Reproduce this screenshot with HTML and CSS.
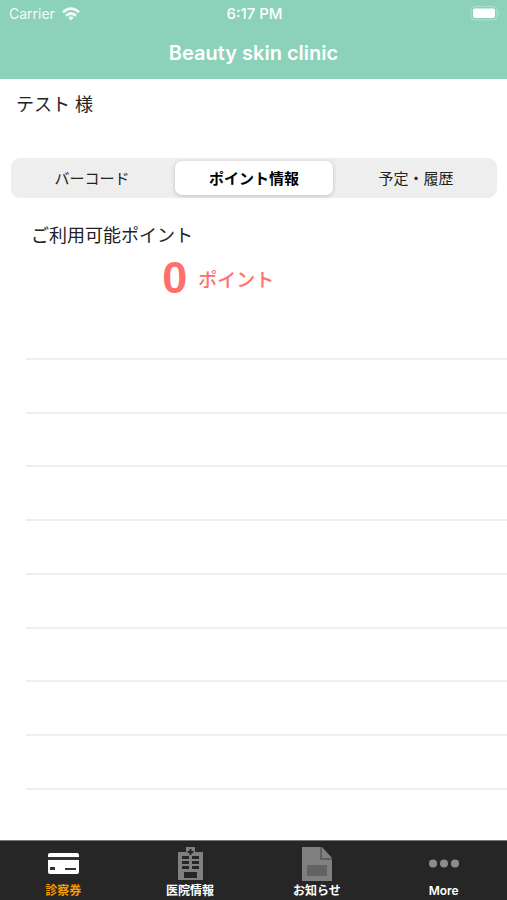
FILE: index.html
```html
<!DOCTYPE html>
<html lang="ja">
<head>
<meta charset="utf-8">
<meta name="viewport" content="width=device-width, initial-scale=1">
<title>Beauty skin clinic</title>
<link rel="stylesheet" href="styles.css">
</head>
<body>
<header class="header">
  <div class="status">
    <div class="carrier">
      <span>Carrier</span>
      <svg width="18" height="14" viewBox="0 0 18 14" fill="none" stroke="#fff" stroke-width="2.8" aria-hidden="true">
        <path d="M1 5.2Q9-2 17 5.2M4 8.7Q9 4.2 14 8.7"/>
        <path d="M6.3 10.6Q9 8.4 11.7 10.6L9 13.4Z" fill="#fff" stroke="none"/>
      </svg>
    </div>
    <time class="clock">6:17 PM</time>
    <svg class="battery" width="30" height="15" viewBox="0 0 30 15" aria-hidden="true">
      <rect x="1" y=".5" width="26" height="13.5" rx="4" fill="none" stroke="#fff" stroke-opacity=".3"/>
      <rect x="3" y="2.5" width="22" height="9.5" rx="2" fill="#fff"/>
      <path d="M28.2 5Q30 7 28.2 9.5Z" fill="#fff" fill-opacity=".4"/>
    </svg>
  </div>
  <h1 class="title">Beauty skin clinic</h1>
</header>
<main class="main">
  <p class="patient">テスト 様</p>
  <div class="segments">
    <button class="segment" type="button">バーコード</button>
    <button class="segment selected" type="button">ポイント情報</button>
    <button class="segment" type="button">予定・履歴</button>
  </div>
  <h2 class="label">ご利用可能ポイント</h2>
  <p class="points"><span class="number">0</span><span>ポイント</span></p>
  <ul class="history">
    <li></li><li></li><li></li><li></li><li></li><li></li><li></li><li></li><li></li>
  </ul>
</main>
<nav class="tabs">
  <a class="tab active" href="#card">
    <svg width="34" height="34" viewBox="0 0 34 34" aria-hidden="true">
      <rect x="2" y="6" width="31" height="21" rx="2" fill="#fff"/>
      <path d="M2 10h31v3H2zM4 20h5v3H4zM19 21h11v2H19z" fill="#333"/>
    </svg>
    <span>診察券</span>
  </a>
  <a class="tab" href="#clinic">
    <svg width="34" height="34" viewBox="0 0 34 34" aria-hidden="true">
      <path d="M5 5h8V0h9v5h8v28H5z" fill="#808080"/>
      <path d="M16.500 2h2v2h2v2h-2v2h-2V6h-2V4h2zM9 9h7v3H9zM19 9h7v3h-7zM9 14h7v3H9zM19 14h7v3h-7zM9 19h7v3H9zM19 19h7v3h-7zM11 25h13v6H11z" fill="#262626"/>
    </svg>
    <span>医院情報</span>
  </a>
  <a class="tab" href="#news">
    <svg width="34" height="34" viewBox="0 0 34 34" aria-hidden="true">
      <path d="M2 0h20l10 11v23H2z" fill="#808080"/>
      <path d="M21 0v12h11" fill="none" stroke="#555" stroke-width="1.500"/>
      <path d="M7 18h20v11H7z" fill="#636363"/>
    </svg>
    <span>お知らせ</span>
  </a>
  <a class="tab" href="#more">
    <svg width="34" height="34" viewBox="0 0 34 34" fill="#8c8c8c" aria-hidden="true">
      <circle cx="6" cy="16.500" r="4"/><circle cx="17" cy="16.500" r="4"/><circle cx="28" cy="16.500" r="4"/>
    </svg>
    <span>More</span>
  </a>
</nav>
</body>
</html>
```
FILE: styles.css
```css
* {
  box-sizing: border-box;
}

body {
  margin: 0;
  min-height: 100vh;
  display: flex;
  flex-direction: column;
  background: #fff;
  color: #222;
  font-family: Inter, "Noto Sans CJK JP", sans-serif;
}

h1, h2, p, ul {
  margin: 0;
  padding: 0;
  font-weight: 400;
}

.header {
  background: #8cd2ba;
  color: #fff;
  padding-bottom: 12px;
}

.status {
  display: grid;
  grid-template-columns: 1fr auto 1fr;
  align-items: center;
  height: 27px;
  padding: 0 7px 0 9px;
  font-size: 14px;
}

.carrier {
  display: flex;
  align-items: center;
  gap: 7px;
  opacity: 0.9;
}

.clock {
  font-size: 15px;
  font-weight: 500;
}

.battery {
  justify-self: end;
}

.title {
  font-size: 20px;
  font-weight: 600;
  line-height: 28px;
  padding-top: 12px;
  text-align: center;
}

.main {
  flex: 1;
  display: flex;
  flex-direction: column;
}

.patient {
  padding: 12px 16px 0;
  font-size: 18px;
  line-height: 28px;
}

.segments {
  display: grid;
  grid-template-columns: repeat(3, 1fr);
  gap: 4px;
  margin: 39px 10px 0 11px;
  padding: 3px 2px;
  background: #eee;
  border-radius: 9px;
}

.segment {
  height: 34px;
  padding: 0 0 2px;
  border: 0;
  border-radius: 7px;
  background: transparent;
  color: #222;
  font-family: inherit;
  font-size: 15px;
}

.selected {
  background: #fff;
  color: #000;
  font-weight: 700;
  box-shadow: 0 1px 4px rgba(0, 0, 0, 0.2);
}

.label {
  padding: 24px 31px 0;
  font-size: 18px;
  line-height: 28px;
}

.points {
  display: flex;
  align-items: center;
  gap: 11px;
  padding-left: 32%;
  height: 56px;
  color: #ff6f6c;
  font-size: 19px;
  font-weight: 500;
}

.number {
  font-family: "Liberation Sans", sans-serif;
  font-size: 45px;
  font-weight: 700;
}

.history {
  flex: 1;
  display: flex;
  flex-direction: column;
  padding: 0 0 50px 26px;
  list-style: none;
}

.history li {
  flex: 1;
  min-height: 44px;
  border-bottom: 2px solid #eee;
}

.tabs {
  display: grid;
  grid-template-columns: repeat(4, 1fr);
  height: 60px;
  background: #262626;
  border-top: 1px solid #777;
}

.tab {
  display: flex;
  flex-direction: column;
  align-items: center;
  padding-top: 6px;
  color: #fff;
  font-size: 12px;
  font-weight: 600;
  line-height: 20px;
  text-decoration: none;
}

.active {
  color: #f59a00;
}
```
